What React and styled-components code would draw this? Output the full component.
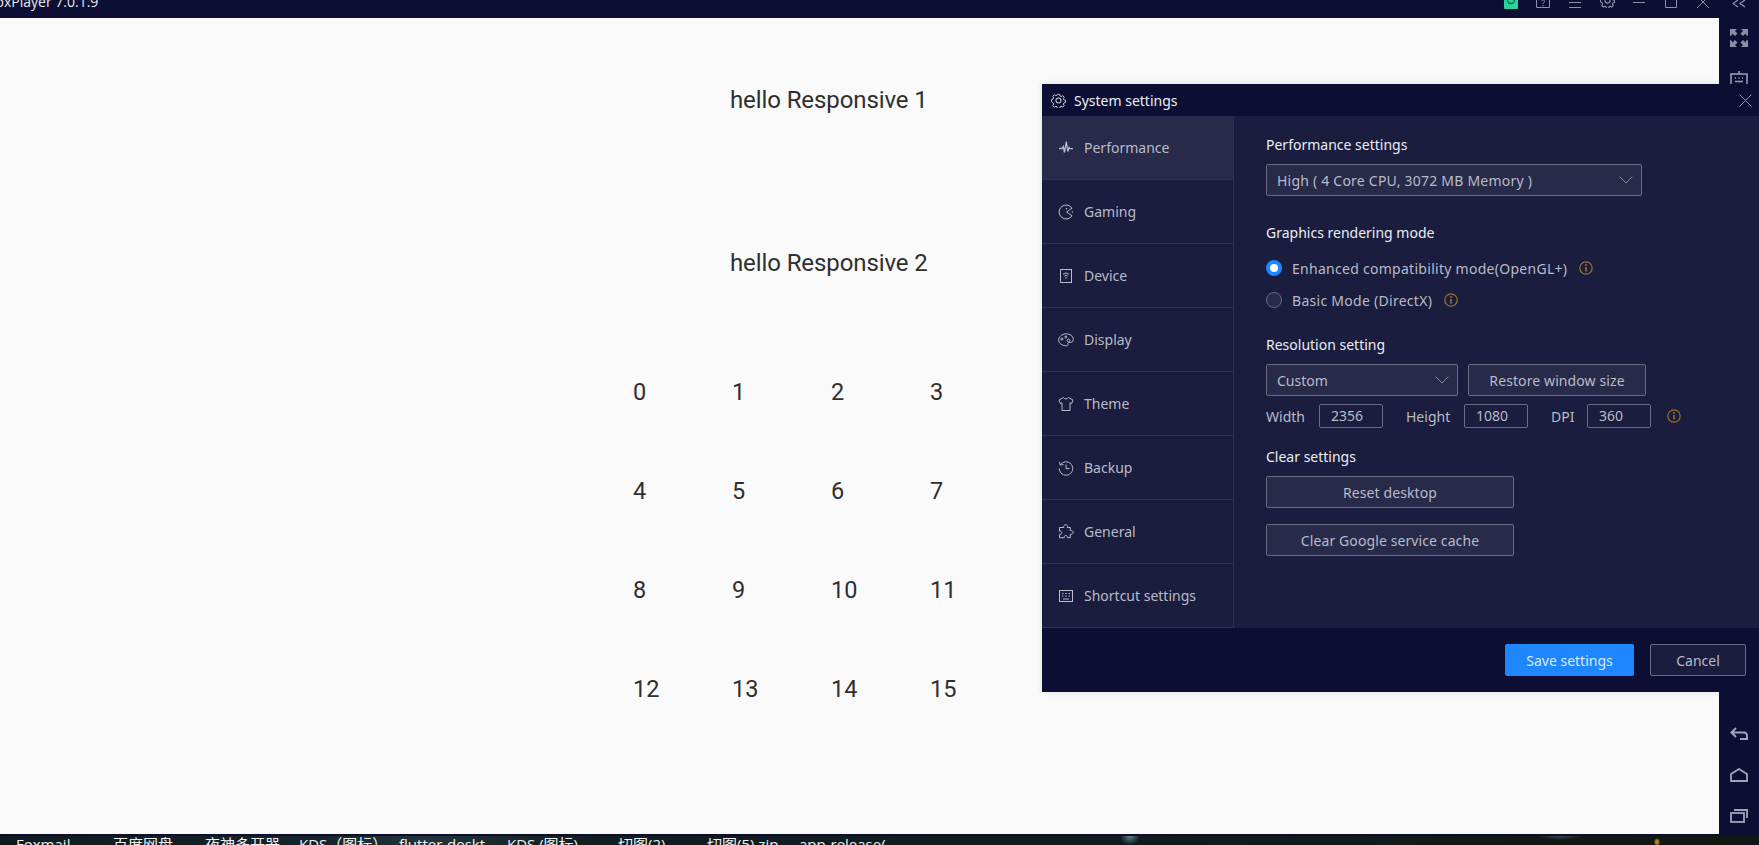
import React from "react";
import styled, { createGlobalStyle } from "styled-components";
import { ChevronDown } from "lucide-react";

const Global = createGlobalStyle`
  html, body { margin: 0; padding: 0; height: 100%; background: #fafafa; overflow: hidden; }
  #root { height: 845px; }
  * { box-sizing: border-box; }
`;

const ui = `"Noto Sans", "Noto Sans CJK SC", sans-serif`;

const Page = styled.div`
  position: relative;
  width: 1759px;
  height: 845px;
  display: flex;
  flex-direction: column;
  overflow: hidden;
  font-family: ${ui};
`;
const TitleBar = styled.header`
  flex: 0 0 18px;
  height: 18px;
  background: #0c0f33;
  display: flex;
  align-items: flex-end;
  overflow: hidden;
`;
const AppName = styled.div`
  flex: 1;
  margin-left: -15px;
  margin-bottom: 6px;
  color: #e8e9ef;
  font-size: 14px;
  line-height: 20px;
  white-space: nowrap;
  font-family: "Open Sans", ${ui};
`;
const TopIcons = styled.div`
  display: flex;
  align-items: flex-start;
  height: 18px;
  padding-right: 4px;
`;
const TopSlot = styled.div`
  width: 32px;
  height: 18px;
  display: flex;
  justify-content: center;
  align-items: flex-start;
  margin-top: ${(p) => p.$shift || 0}px;
  margin-left: ${(p) => p.$left || 0}px;
`;
const Body = styled.div`
  flex: 1;
  display: flex;
  min-height: 0;
`;
const Stage = styled.main`
  flex: 1;
  background: #fafafa;
  font-family: Roboto, sans-serif;
  color: #2f2f2f;
  padding: 68px 0 0 730px;
`;
const Hello = styled.div`
  font-size: 24px;
  line-height: 28px;
  height: 163px;
  letter-spacing: -0.1px;
  white-space: nowrap;
`;
const NumGrid = styled.div`
  margin: -34px 0 0 -97px;
  display: grid;
  grid-template-columns: repeat(4, 99px);
  grid-auto-rows: 99px;
`;
const Num = styled.div`
  font-size: 23.5px;
  line-height: 28px;
`;
const SideRail = styled.aside`
  flex: 0 0 40px;
  background: #0c0f33;
  display: flex;
  flex-direction: column;
  align-items: center;
  padding-top: 11px;
`;
const RailGap = styled.div`
  flex: 1;
`;
const RailBtn = styled.div`
  height: ${(p) => p.$h || 41}px;
  display: flex;
  justify-content: center;
`;
const Wallpaper = styled.footer`
  flex: 0 0 11px;
  height: 11px;
  border-top: 2px solid #0c0f33;
  background:
    radial-gradient(ellipse 10px 9px at 1130px 0, #60808c 0%, rgba(96, 128, 140, 0) 100%),
    radial-gradient(ellipse 22px 4px at 1560px 0, #34474f 0%, rgba(52, 71, 79, 0) 100%),
    radial-gradient(ellipse 3px 4px at 1657px 6px, #b97f16 0%, #b97f16 50%, rgba(185, 127, 22, 0) 100%),
    linear-gradient(90deg, #0f1a1e 0%, #14242a 18%, #22343a 24%, #101c20 34%, #101b1e 60%, #121a1a 80%, #101612 100%);
  display: flex;
  overflow: hidden;
`;
const TaskRow = styled.div`
  display: flex;
  padding-left: 16px;
  margin-top: -1px;
`;
const TaskLabel = styled.span`
  flex: 0 0 ${(p) => p.$w}px;
  color: #f0f2f2;
  font-size: 15px;
  line-height: 18px;
  white-space: nowrap;
  font-family: "Open Sans", "Noto Sans CJK SC", sans-serif;
  overflow: hidden;
`;

const Modal = styled.section`
  position: absolute;
  left: 1042px;
  top: 84px;
  width: 717px;
  height: 608px;
  display: flex;
  flex-direction: column;
  background: #1a1d3d;
  box-shadow: 0 0 6px rgba(0, 0, 0, 0.12);
`;
const ModalHead = styled.div`
  flex: 0 0 32px;
  background: #0c0f33;
  display: flex;
  align-items: center;
  padding: 0 7px 0 9px;
  gap: 8px;
  color: #eceef4;
  font-size: 14px;
`;
const HeadTitle = styled.div`
  flex: 1;
`;
const ModalMain = styled.div`
  flex: 1;
  display: flex;
  min-height: 0;
`;
const Menu = styled.nav`
  flex: 0 0 192px;
  border-right: 1px solid #2f3150;
  display: flex;
  flex-direction: column;
`;
const MenuItem = styled.div`
  flex: 0 0 64px;
  display: flex;
  align-items: center;
  padding-left: 16px;
  gap: 10px;
  font-size: 14px;
  color: #b9bbc8;
  background: ${(p) => (p.$active ? "#272a49" : "transparent")};
  border-bottom: 1px solid #2f3150;
`;
const IconBox = styled.span`
  width: 16px;
  height: 16px;
  display: flex;
  flex: none;
`;
const Content = styled.div`
  flex: 1;
  padding: 18px 0 0 32px;
  display: flex;
  flex-direction: column;
  align-items: flex-start;
`;
const Heading = styled.h3`
  margin: ${(p) => p.$top || 0}px 0 0;
  font-size: 14px;
  font-weight: 400;
  line-height: 22px;
  color: #eceef4;
`;
const SelectBox = styled.div`
  width: ${(p) => p.$w}px;
  height: 32px;
  background: #272a49;
  border: 1px solid #6a6c83;
  border-radius: 2px;
  display: flex;
  align-items: center;
  justify-content: space-between;
  padding: 0 3px 0 10px;
  color: #b9bbc8;
  font-size: 14px;
  letter-spacing: ${(p) => p.$track || 0}px;
`;
const Spaced = styled.div`
  margin-top: ${(p) => p.$top || 0}px;
`;
const RadioRow = styled.div`
  height: 32px;
  display: flex;
  align-items: center;
  color: #b9bbc8;
  font-size: 14px;
  letter-spacing: 0.28px;
`;
const Radio = styled.span`
  width: 16px;
  height: 16px;
  border-radius: 50%;
  margin-right: 10px;
  flex: none;
  ${(p) =>
    p.$on
      ? "background:#fff;border:4px solid #1e87ff;"
      : "background:#272a49;border:1px solid #6a6c83;"}
`;
const InfoSlot = styled.span`
  display: inline-flex;
  margin-left: ${(p) => p.$left || 12}px;
`;
const Row = styled.div`
  display: flex;
  align-items: center;
  margin-top: ${(p) => p.$top || 0}px;
  gap: ${(p) => p.$gap || 0}px;
`;
const Btn = styled.button`
  width: ${(p) => p.$w}px;
  height: 32px;
  background: #272a49;
  border: 1px solid #6a6c83;
  border-radius: 2px;
  color: #b9bbc8;
  font-family: inherit;
  font-size: 14px;
  letter-spacing: 0.1px;
  padding: 0;
  margin-top: ${(p) => p.$top || 0}px;
`;
const FieldLabel = styled.span`
  width: ${(p) => p.$w}px;
  font-size: 14px;
  color: #b9bbc8;
`;
const NumInput = styled.div`
  width: 64px;
  height: 24px;
  border: 1px solid #6a6c83;
  border-radius: 2px;
  color: #b9bbc8;
  font-size: 14px;
  line-height: 22px;
  padding-left: 11px;
  margin-right: ${(p) => p.$right || 0}px;
`;
const ModalFoot = styled.div`
  flex: 0 0 64px;
  background: #0c0f33;
  display: flex;
  align-items: center;
  justify-content: flex-end;
  padding-right: 13px;
  gap: 16px;
`;
const SaveBtn = styled.button`
  width: 129px;
  height: 32px;
  background: #1e87ff;
  border: none;
  border-radius: 2px;
  color: #dbe9fb;
  font-family: inherit;
  font-size: 14px;
`;
const CancelBtn = styled.button`
  width: 96px;
  height: 32px;
  background: #1a1d3d;
  border: 1px solid #6a6c83;
  border-radius: 2px;
  color: #b9bbc8;
  font-family: inherit;
  font-size: 14px;
`;

const S = ({ w = 16, h = 16, vb, c = "#b9bbc8", sw = 1, children }) => (
  <svg width={w} height={h} viewBox={vb || `0 0 ${w} ${h}`} fill="none" stroke={c} strokeWidth={sw} style={{ display: "block", flex: "none" }}>
    {children}
  </svg>
);

const Gear = ({ size = 16, c = "#c9cbd6", sw = 1.1 }) => (
  <svg width={size} height={size} viewBox="0 0 16 16" fill="none" stroke={c} strokeWidth={sw} style={{ display: "block", flex: "none" }}>
    <path d="M6.700 1h2.600l.4 1.900 1.300.6 1.700-1 1.800 1.800-1 1.700.6 1.300 1.900.4v2.600l-1.900.4-.6 1.300 1 1.700-1.800 1.800-1.700-1-1.300.6-.4 1.900H6.700l-.4-1.900-1.300-.6-1.700 1-1.800-1.800 1-1.700-.6-1.300L0 9.300V6.700l1.900-.4.6-1.300-1-1.700 1.800-1.800 1.700 1 1.300-.6z" strokeLinejoin="round" transform="translate(.5 .5) scale(.94)" />
    <circle cx="8" cy="8" r="2.700" />
  </svg>
);

const Info = () => (
  <S w={14} h={14}>
    <circle cx="7" cy="7" r="6.200" stroke="#a06e2c" strokeWidth="1.200" />
    <path d="M7 6v4.500" stroke="#b57a30" strokeWidth="1.400" />
    <circle cx="7" cy="3.900" r="0.900" fill="#b57a30" stroke="none" />
  </S>
);

const menuIcons = {
  perf: <path d="M1 8.500h3l1.300-2 1.200 6L8.300 1.500l1.500 10 1.200-4 1 1.200H15" strokeWidth="1.300" />,
  game: (
    <>
      <path d="M14 4.200A7 7 0 1 0 14 11.800L8.600 8z" />
      <circle cx="8.500" cy="4.600" r="0.800" fill="#b9bbc8" stroke="none" />
      <circle cx="14.400" cy="8" r="0.700" fill="#b9bbc8" stroke="none" />
    </>
  ),
  device: (
    <>
      <rect x="2.500" y="1.500" width="11" height="13" />
      <path d="M5 6.300a4.400 4.400 0 0 1 6 0M6.300 8a2.500 2.500 0 0 1 3.400 0" />
      <circle cx="8" cy="10" r="0.800" fill="#b9bbc8" stroke="none" />
    </>
  ),
  display: (
    <>
      <path d="M8 1.800c4 0 7.300 2.400 7.300 5.600 0 2.400-2 3.300-3.600 3-1.300-.2-2 .4-1.700 1.500.3 1-.3 1.900-1.600 1.900C4 13.800.700 11.200.700 8 .700 4.700 4 1.800 8 1.800z" />
      <circle cx="4" cy="7" r="1" />
      <circle cx="7.800" cy="5" r="1" />
      <circle cx="10.500" cy="8.500" r="1.400" />
    </>
  ),
  theme: <path d="M5.500 1.500 1 4l1.300 3.500 1.700-.8v7.800h8V6.700l1.700.8L15 4l-4.500-2.500c-.8 1.900-4.200 1.900-5 0z" />,
  backup: (
    <>
      <path d="M2.300 5A6.700 6.700 0 1 1 1.300 8.500M1.500 1.800 2.200 5l3.300-.4" />
      <path d="M8 4.500V8.500h3.500" />
    </>
  ),
  general: <path d="M5.800 3.500c-.6-1.500.4-2.700 1.800-2.700s2.400 1.200 1.800 2.700h2.900v3.200c1.500-.5 2.900.3 2.900 1.700s-1.400 2.200-2.900 1.700v3.600H9.300c.4-1.300-.4-2.300-1.500-2.300s-2 1-1.500 2.300H1.500v-3.400c1.300.4 2.300-.4 2.300-1.500S2.800 6.800 1.500 7.200V3.500z" />,
  shortcut: (
    <>
      <rect x="1.500" y="2.500" width="13" height="11" />
      <path d="M4 5.500h1.500M7.200 5.500h1.500M10.500 5.500H12M4 8h1.500M7.200 8h1.500M10.500 8H12M5 11h6" />
    </>
  ),
};

const items = [
  ["perf", "Performance", true],
  ["game", "Gaming"],
  ["device", "Device"],
  ["display", "Display"],
  ["theme", "Theme"],
  ["backup", "Backup"],
  ["general", "General"],
  ["shortcut", "Shortcut settings"],
];

const nums = Array.from({ length: 16 }, (_, i) => i);
const tasks = [
  ["Foxmail", 97],
  ["百度网盘", 92],
  ["夜神多开器", 94],
  ["KDS（图标）", 100],
  ["flutter-deskt", 108],
  ["KDS (图标)", 111],
  ["切图(2)", 89],
  ["切图(5).zip", 92],
  ["app-release(", 100],
];

export default function App() {
  return (
    <Page>
      <Global />
      <TitleBar>
        <AppName>NoxPlayer 7.0.1.9</AppName>
        <TopIcons>
          <TopSlot>
            <S w={14} h={9} c="none">
              <path d="M0 0h14v8a1 1 0 0 1-1 1H1a1 1 0 0 1-1-1z" fill="#2ad39a" />
              <path d="M3.500 0a3.500 3.500 0 0 0 7 0" stroke="#0c5a48" strokeWidth="1.300" />
            </S>
          </TopSlot>
          <TopSlot>
            <S w={14} h={8} c="#8f90a8">
              <path d="M.5 0v7.500h13V0" />
              <path d="M5.500 1c1-1.500 3.500-1 3 .5-.3 1-1.500 1.300-1.500 2.500M7 5v1.300" />
            </S>
          </TopSlot>
          <TopSlot>
            <S w={12} h={9} c="#8f90a8">
              <path d="M0 2.500h12M0 7.500h12" />
            </S>
          </TopSlot>
          <TopSlot $shift={-7}>
            <Gear size={15} c="#8f90a8" sw={1.300} />
          </TopSlot>
          <TopSlot>
            <S w={12} h={4} c="#8f90a8">
              <path d="M0 2.500h12" />
            </S>
          </TopSlot>
          <TopSlot>
            <S w={12} h={8} c="#8f90a8">
              <path d="M.5 0v7.500h11V0" />
            </S>
          </TopSlot>
          <TopSlot>
            <S w={12} h={8} c="#8f90a8">
              <path d="M0 8l6-6 6 6M6 2 3.500-.5M6 2 8.500-.5" />
            </S>
          </TopSlot>
          <TopSlot $left={4}>
            <S w={14} h={8} c="#8f90a8" sw={1.300}>
              <path d="M6 0 1 3.500 6 7M13 0 8 3.500 13 7" />
            </S>
          </TopSlot>
        </TopIcons>
      </TitleBar>
      <Body>
        <Stage>
          <Hello>hello Responsive 1</Hello>
          <Hello>hello Responsive 2</Hello>
          <NumGrid>
            {nums.map((n) => (
              <Num key={n}>{n}</Num>
            ))}
          </NumGrid>
        </Stage>
        <SideRail>
          <RailBtn>
            <S w={18} h={18} c="none">
              <path d="M0 0h7L5 2l2.500 2.500-2.500 2.500L2.500 4.500 1.800 6.200 0 7zM18 0h-7l2 2-2.500 2.500 2.500 2.500 2.500-2.500 .7 1.700L18 7zM0 18h7l-2-2 2.500-2.500L5 11l-2.500 2.500L1.800 11.800 0 11zM18 18h-7l2-2-2.500-2.500 2.500-2.500 2.500 2.500.7-1.700L18 11z" fill="#8d8ea6" />
            </S>
          </RailBtn>
          <RailBtn>
            <S w={18} h={16} c="#a2a3b7" sw={1.500}>
              <path d="M1 16V4h16v12M9 4V1" />
              <path d="M5 8h1M8.500 8h1M12 8h1M5 11.500h8" />
            </S>
          </RailBtn>
          <RailGap />
          <RailBtn>
            <S w={18} h={14} c="#a2a3b7" sw={2}>
              <path d="M6 1 1.500 5.500 6 10M2 5.500h12c3 0 3 2.500 3 4v2.500h-7" />
            </S>
          </RailBtn>
          <RailBtn>
            <S w={18} h={14} c="#a2a3b7" sw={1.800}>
              <path d="M1 13V6l8-5 8 5v7z" />
            </S>
          </RailBtn>
          <RailBtn $h={25}>
            <S w={18} h={14} c="#a2a3b7" sw={1.800}>
              <rect x="1" y="4" width="13" height="9" />
              <path d="M4 1h13v8" />
            </S>
          </RailBtn>
        </SideRail>
      </Body>
      <Wallpaper>
        <TaskRow>
          {tasks.map(([t, w]) => (
            <TaskLabel key={t} $w={w}>{t}</TaskLabel>
          ))}
        </TaskRow>
      </Wallpaper>

      <Modal>
        <ModalHead>
          <Gear size={15} sw={1.100} />
          <HeadTitle>System settings</HeadTitle>
          <S w={13} h={13} c="#8f90a8">
            <path d="M.5.500l12 12M12.500.500l-12 12" />
          </S>
        </ModalHead>
        <ModalMain>
          <Menu>
            {items.map(([k, label, active]) => (
              <MenuItem key={k} $active={active}>
                <IconBox>
                  <S>{menuIcons[k]}</S>
                </IconBox>
                {label}
              </MenuItem>
            ))}
          </Menu>
          <Content>
            <Heading>Performance settings</Heading>
            <Spaced $top={8}>
              <SelectBox $w={376} $track={0.22}>
                High ( 4 Core CPU, 3072 MB Memory )
                <ChevronDown size={24} strokeWidth={1} color="#8a8ca2" />
              </SelectBox>
            </Spaced>
            <Heading $top={26}>Graphics rendering mode</Heading>
            <Spaced $top={8}>
              <RadioRow>
                <Radio $on />
                Enhanced compatibility mode(OpenGL+)
                <InfoSlot><Info /></InfoSlot>
              </RadioRow>
              <RadioRow>
                <Radio />
                Basic Mode (DirectX)
                <InfoSlot><Info /></InfoSlot>
              </RadioRow>
            </Spaced>
            <Heading $top={18}>Resolution setting</Heading>
            <Row $top={8} $gap={10}>
              <SelectBox $w={192}>
                Custom
                <ChevronDown size={24} strokeWidth={1} color="#8a8ca2" />
              </SelectBox>
              <Btn $w={178}>Restore window size</Btn>
            </Row>
            <Row $top={8}>
              <FieldLabel $w={53}>Width</FieldLabel>
              <NumInput $right={23}>2356</NumInput>
              <FieldLabel $w={58}>Height</FieldLabel>
              <NumInput $right={23}>1080</NumInput>
              <FieldLabel $w={36}>DPI</FieldLabel>
              <NumInput>360</NumInput>
              <InfoSlot $left={16}><Info /></InfoSlot>
            </Row>
            <Heading $top={18}>Clear settings</Heading>
            <Btn $w={248} $top={8}>Reset desktop</Btn>
            <Btn $w={248} $top={16}>Clear Google service cache</Btn>
          </Content>
        </ModalMain>
        <ModalFoot>
          <SaveBtn>Save settings</SaveBtn>
          <CancelBtn>Cancel</CancelBtn>
        </ModalFoot>
      </Modal>
    </Page>
  );
}
